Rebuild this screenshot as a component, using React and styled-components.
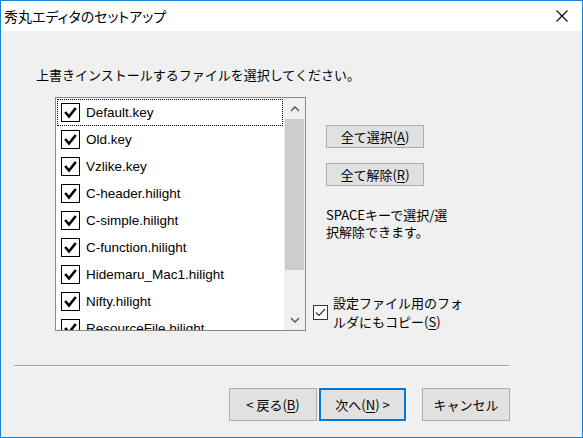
import React from "react";
import styled, { createGlobalStyle } from "styled-components";

const Global = createGlobalStyle`
  html, body { margin: 0; padding: 0; background: #ffffff; }
  body { font-family: "Noto Sans CJK JP", "Noto Sans", sans-serif; }
  * { box-sizing: border-box; }
`;

const Window = styled.div`
  width: 583px;
  height: 438px;
  border: 1px solid #1883d7;
  background: #f0f0f0;
  display: flex;
  flex-direction: column;
  overflow: hidden;
`;

const TitleBar = styled.div`
  height: 30px;
  background: #ffffff;
  display: flex;
  align-items: center;
  justify-content: space-between;
  padding: 0 14px 0 3px;
`;

const Title = styled.div`
  font-family: "Noto Sans CJK JP", sans-serif;
  font-size: 14px;
  font-feature-settings: "palt";
  color: #000;
  line-height: 30px;
`;

const Body = styled.div`
  flex: 1;
  display: flex;
  flex-direction: column;
  padding-left: 35px;
`;

const Instruction = styled.div`
  margin-top: 36px;
  font-size: 13px;
  line-height: 16px;
  color: #000;
  white-space: nowrap;
`;

const MainRow = styled.div`
  display: flex;
  align-items: flex-start;
  margin-top: 14px;
  margin-left: 19px;
`;

const ListBox = styled.div`
  width: 251px;
  height: 234px;
  border: 1px solid #828790;
  background: #fff;
  display: flex;
  overflow: hidden;
`;

const Items = styled.div`
  flex: 1;
  padding-top: 1px;
  overflow: hidden;
`;

const Row = styled.div`
  height: 27px;
  display: flex;
  align-items: center;
  padding-left: 3px;
  margin: 0 1px;
  border: 1px dotted ${(p) => (p.$focus ? "#000" : "transparent")};
`;

const BigCheck = styled.div`
  width: 19px;
  height: 19px;
  border: 1px solid #000;
  background: #fff;
  display: flex;
  align-items: center;
  justify-content: center;
  flex-shrink: 0;
`;

const ItemText = styled.span`
  margin-left: 6px;
  font-family: "Liberation Sans", "Noto Sans CJK JP", sans-serif;
  font-size: 13.5px;
  color: #000;
  white-space: nowrap;
`;

const ScrollBar = styled.div`
  width: 21px;
  background: #f0f0f0;
  display: flex;
  flex-direction: column;
`;

const ArrowBtn = styled.div`
  height: 21px;
  display: flex;
  align-items: center;
  justify-content: center;
  flex-shrink: 0;
`;

const Track = styled.div`
  flex: 1;
  display: flex;
  flex-direction: column;
`;

const Thumb = styled.div`
  height: 151px;
  margin: 0 1px 0 1px;
  background: #cdcdcd;
`;

const RightCol = styled.div`
  margin-left: 7px;
  padding-top: 28px;
  display: flex;
  flex-direction: column;
  align-items: flex-start;
`;

const Button = styled.button`
  font-family: "Noto Sans CJK JP", sans-serif;
  font-size: 13px;
  color: #000;
  background: #e1e1e1;
  border: ${(p) => (p.$default ? "2px solid #0078d7" : "1px solid #adadad")};
  width: ${(p) => p.$w}px;
  height: ${(p) => p.$h}px;
  margin-left: ${(p) => p.$ml || 0}px;
  margin-top: ${(p) => p.$mt || 0}px;
  padding: 0;
  display: flex;
  align-items: center;
  justify-content: center;
  line-height: 1;
  cursor: default;
`;

const U = styled.span`
  text-decoration: underline;
  text-underline-offset: 2px;
`;

const Hint = styled.div`
  margin-top: 20px;
  margin-left: 13px;
  font-size: 13px;
  line-height: 17px;
  color: #000;
  white-space: nowrap;
`;

const CheckRow = styled.div`
  margin-top: 53px;
  display: flex;
  align-items: flex-start;
`;

const SmallCheck = styled.div`
  width: 15px;
  height: 15px;
  margin-top: 12px;
  border: 1px solid #333;
  background: #fff;
  display: flex;
  align-items: center;
  justify-content: center;
  flex-shrink: 0;
`;

const CheckLabel = styled.div`
  margin-left: 5px;
  font-size: 13px;
  line-height: 19px;
  color: #000;
  white-space: nowrap;
`;

const Separator = styled.div`
  margin-top: 34px;
  margin-left: -22px;
  width: 495px;
  height: 2px;
  border-top: 1px solid #a0a0a0;
  border-bottom: 1px solid #ffffff;
`;

const ButtonRow = styled.div`
  margin-top: 21px;
  margin-left: 193px;
  display: flex;
  align-items: flex-start;
`;

const Close = () => (
  <svg width="12" height="12" viewBox="0 0 12 12">
    <path d="M0.5 0.5 L11.5 11.5 M11.5 0.5 L0.5 11.5" stroke="#000" strokeWidth="1.1" fill="none" />
  </svg>
);

const BoldTick = () => (
  <svg width="13" height="12" viewBox="0 0 13 12">
    <path d="M2 6 L5 9.5 L11 2" stroke="#000" strokeWidth="2.6" fill="none" strokeLinecap="square" />
  </svg>
);

const ThinTick = () => (
  <svg width="11" height="9" viewBox="0 0 11 9">
    <path d="M1 4.5 L4 7.5 L10 1" stroke="#333" strokeWidth="1.2" fill="none" />
  </svg>
);

const Chevron = ({ down }) => (
  <svg width="10" height="6" viewBox="0 0 10 6">
    <path
      d={down ? "M1 1 L5 5 L9 1" : "M1 5 L5 1 L9 5"}
      stroke="#606060"
      strokeWidth="1.6"
      fill="none"
    />
  </svg>
);

const files = [
  "Default.key",
  "Old.key",
  "Vzlike.key",
  "C-header.hilight",
  "C-simple.hilight",
  "C-function.hilight",
  "Hidemaru_Mac1.hilight",
  "Nifty.hilight",
  "ResourceFile.hilight",
];

export default function App() {
  return (
    <>
      <Global />
      <Window>
        <TitleBar>
          <Title>秀丸エディタのセットアップ</Title>
          <Close />
        </TitleBar>
        <Body>
          <Instruction>上書きインストールするファイルを選択してください。</Instruction>
          <MainRow>
            <ListBox>
              <Items>
                {files.map((f, i) => (
                  <Row key={f} $focus={i === 0}>
                    <BigCheck>
                      <BoldTick />
                    </BigCheck>
                    <ItemText>{f}</ItemText>
                  </Row>
                ))}
              </Items>
              <ScrollBar>
                <ArrowBtn>
                  <Chevron />
                </ArrowBtn>
                <Track>
                  <Thumb />
                </Track>
                <ArrowBtn>
                  <Chevron down />
                </ArrowBtn>
              </ScrollBar>
            </ListBox>
            <RightCol>
              <Button $w={98} $h={23} $ml={13}>
                全て選択(<U>A</U>)
              </Button>
              <Button $w={98} $h={23} $ml={13} $mt={15}>
                全て解除(<U>R</U>)
              </Button>
              <Hint>
                SPACEキーで選択/選
                <br />
                択解除できます。
              </Hint>
              <CheckRow>
                <SmallCheck>
                  <ThinTick />
                </SmallCheck>
                <CheckLabel>
                  設定ファイル用のフォ
                  <br />
                  ルダにもコピー(<U>S</U>)
                </CheckLabel>
              </CheckRow>
            </RightCol>
          </MainRow>
          <Separator />
          <ButtonRow>
            <Button $w={88} $h={33}>
              &lt; 戻る(<U>B</U>)
            </Button>
            <Button $w={87} $h={33} $ml={2} $default>
              次へ(<U>N</U>) &gt;
            </Button>
            <Button $w={88} $h={33} $ml={16}>
              キャンセル
            </Button>
          </ButtonRow>
        </Body>
      </Window>
    </>
  );
}
